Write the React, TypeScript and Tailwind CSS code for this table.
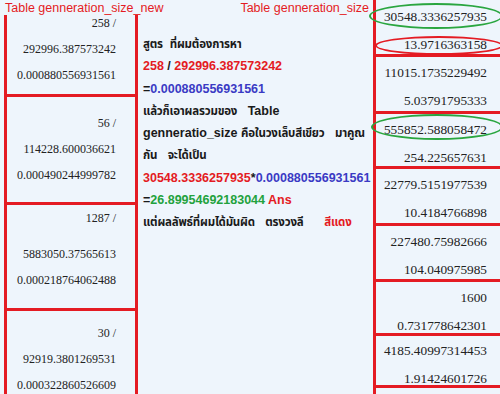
const RED = "text-[#e41b23]";
const TH = "text-[11.5px] tracking-[-0.2px]";

const leftCells = [
  { h: "h-[82px]", pad: "-mt-[5px]", gap: false, lines: ["258 /", "292996.387573242", "0.000880556931561"] },
  { h: "h-[108px]", pad: "pt-[13px]", gap: false, lines: ["56 /", "114228.600036621", "0.000490244999782"] },
  { h: "h-[106px]", pad: "pt-0", gap: true, lines: ["1287 /", "5883050.37565613", "0.000218764062488"] },
  { h: "h-[120px]", pad: "pt-[9px]", gap: false, lines: ["30 /", "92919.3801269531", "0.000322860526609"] },
];

const rightCells = [
  { h: "h-[57px]", pad: "pt-[3px]", a: "30548.3336257935", b: "13.9716363158" },
  { h: "h-[57px]", pad: "pt-[2px]", a: "11015.1735229492", b: "5.03791795333" },
  { h: "h-[55px]", pad: "pt-[2px]", a: "555852.588058472", b: "254.225657631" },
  { h: "h-[57px]", pad: "pt-[2px]", a: "22779.5151977539", b: "10.4184766898" },
  { h: "h-[56px]", pad: "pt-[2px]", a: "227480.75982666", b: "104.040975985" },
  { h: "h-[54px]", pad: "pt-[2px]", a: "1600", b: "0.731778642301" },
  { h: "h-[52px]", pad: "pt-[1px]", a: "4185.40997314453", b: "1.91424601726" },
  { h: "h-[40px]", pad: "pt-[1px]", a: "", b: "" },
];

const serif = "font-['Liberation_Serif','Times_New_Roman',serif]";

export default function App() {
  return (
    <div className="relative flex h-[394px] w-[500px] overflow-hidden bg-[#eef5fc] font-['Liberation_Sans',Arial,'Noto_Sans_Thai',Tahoma,sans-serif]">
      {/* left table */}
      <div className="flex w-[140px] shrink-0 flex-col">
        <div className={`h-[18px] whitespace-nowrap pl-[5px] pt-[1px] text-[12.5px] leading-[14px] ${RED}`}>
          Table genneration_size_new
        </div>
        <div className="ml-[4px] flex w-[134px] flex-1 flex-col border-x-[3px] border-[#e41b23]">
          {leftCells.map((c, i) => (
            <div key={i} className={`${c.h} shrink-0 border-b-[3px] border-[#e41b23]`}>
              <div className={`${c.pad} pr-[19px] text-right text-[12px] leading-[26px] text-[#222] ${serif}`}>
                <div>{c.lines[0]}</div>
                <div className={c.gap ? "mt-[10px]" : ""}>{c.lines[1]}</div>
                <div>{c.lines[2]}</div>
              </div>
            </div>
          ))}
        </div>
      </div>

      {/* explanation */}
      <div className="flex w-[233px] shrink-0 flex-col">
        <div className={`h-[18px] whitespace-nowrap pr-[4px] pt-[1px] text-right text-[12.5px] leading-[14px] ${RED}`}>
          Table genneration_size
        </div>
        <div className="whitespace-pre pl-[3px] pt-[15px] text-[12.5px] font-bold leading-[22.3px] text-[#1a1a1a]">
          <div className="h-[22.3px]">
            <span className={TH}>สูตร</span>{"  "}<span className={TH}>ที่ผมต้องการหา</span>
          </div>
          <div className="h-[22.3px]">
            <span className={RED}>258</span> / <span className={RED}>292996.387573242</span>
          </div>
          <div className="h-[22.3px]">
            =<span className="text-[#3a3ac4]">0.000880556931561</span>
          </div>
          <div className="h-[22.3px]">
            <span className={TH}>แล้วก็เอาผลรวมของ</span>{"   "}Table
          </div>
          <div className="h-[22.3px]">
            genneratio_size <span className={TH}>คือในวงเล็บสีเขียว</span>{"   "}<span className={TH}>มาคูณ</span>
          </div>
          <div className="h-[22.3px]">
            <span className={TH}>กัน</span>{"   "}<span className={TH}>จะได้เป็น</span>
          </div>
          <div className="h-[22.3px]">
            <span className={RED}>30548.3336257935</span>*<span className="text-[#3a3ac4]">0.000880556931561</span>
          </div>
          <div className="h-[22.3px]">
            =<span className="text-[#22a23c]">26.89954692183044</span> <span className={RED}>Ans</span>
          </div>
          <div className="h-[22.3px]">
            <span className={TH}>แต่ผลลัพธ์ที่ผมได้มันผิด</span>{"   "}<span className={TH}>ตรงวงลี</span>
            {"      "}
            <span className={`${TH} ${RED}`}>สีแดง</span>
          </div>
        </div>
      </div>

      {/* right table */}
      <div className="flex w-[127px] shrink-0 flex-col border-l-[3px] border-[#e41b23]">
        {rightCells.map((c, i) => (
          <div key={i} className={`${c.h} shrink-0 border-b-[3px] border-[#e41b23]`}>
            <div className={`${c.pad} pr-[13px] text-right text-[13.3px] leading-[28px] text-[#222] ${serif}`}>
              <div className="h-[28px]">{c.a}</div>
              <div className="h-[28px]">{c.b}</div>
            </div>
          </div>
        ))}
      </div>

      {/* hand-drawn ellipses */}
      <div className="absolute left-[369px] top-[3px] h-[26px] w-[134px] rounded-[50%] border-2 border-[#2aa640]" />
      <div className="absolute left-[375px] top-[36px] h-[19px] w-[128px] rounded-[50%] border-2 border-[#e41b23]" />
      <div className="absolute left-[371px] top-[114px] h-[26px] w-[132px] rounded-[50%] border-2 border-[#2aa640]" />
    </div>
  );
}
